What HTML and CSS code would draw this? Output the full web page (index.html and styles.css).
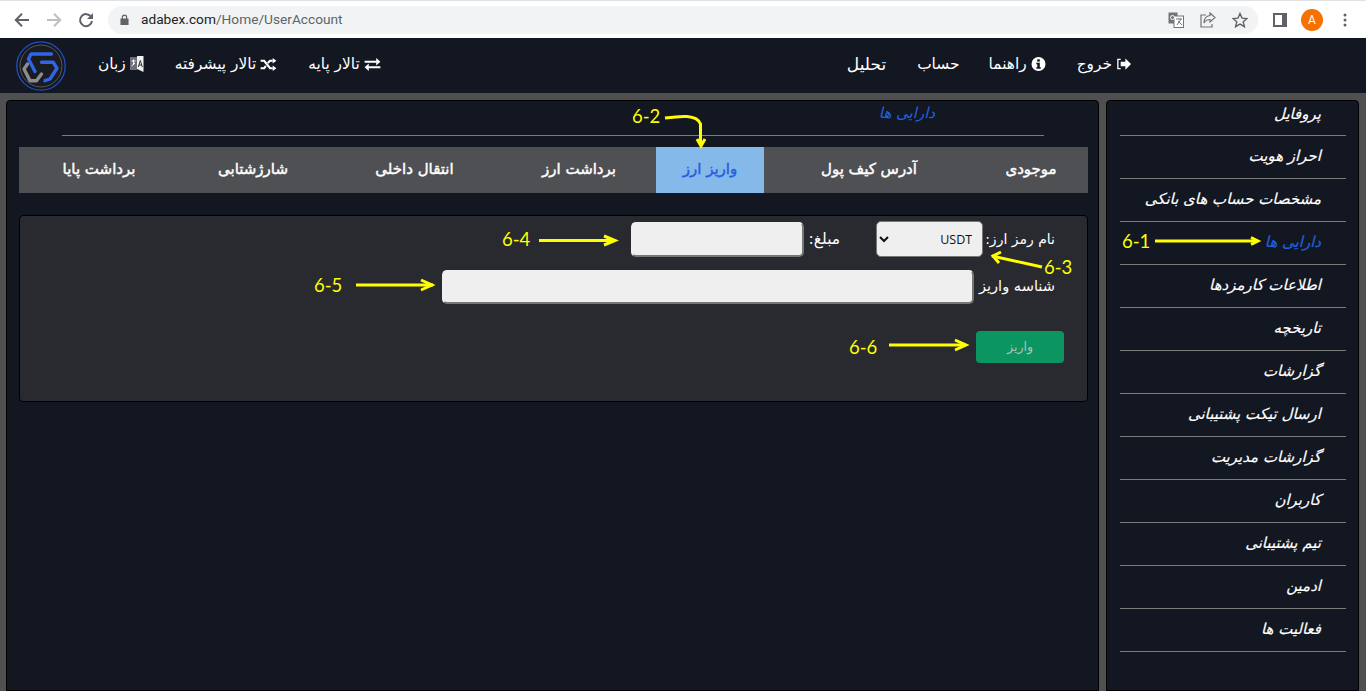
FILE: index.html
```html
<!DOCTYPE html>
<html lang="fa">
<head>
<meta charset="utf-8">
<title>adabex</title>
<link rel="stylesheet" href="styles.css">
</head>
<body>
<div class="chrome">
  <svg class="ci back" viewBox="0 0 16 16"><path d="M15 8H2.500M8 1.800 1.800 8 8 14.200" fill="none" stroke="#5f6368" stroke-width="2"/></svg>
  <svg class="ci fwd" viewBox="0 0 16 16"><path d="M1 8h12.500M8 1.800 14.200 8 8 14.200" fill="none" stroke="#bcbfc3" stroke-width="2"/></svg>
  <svg class="ci reload" viewBox="0 0 16 16"><path d="M13.200 5A6 6 0 1 0 14 9" fill="none" stroke="#5f6368" stroke-width="2"/><path d="M15 1v6H9z" fill="#5f6368"/></svg>
  <div class="omni">
    <svg class="lock" viewBox="0 0 10 12"><path d="M2 5V3.500a3 3 0 0 1 6 0V5h1.500v7H.5V5zm1.300 0h3.400V3.500a1.700 1.700 0 0 0-3.400 0z" fill="#5f6368"/></svg>
    <span class="url">adabex.com<span class="path">/Home/UserAccount</span></span>
    <span class="omni-space"></span>
    <svg class="oi" viewBox="0 0 16 16"><rect x="0.500" y="0.500" width="9" height="11" fill="#70757a"/><rect x="6" y="4" width="9.500" height="11.500" fill="#fff" stroke="#70757a"/><path d="M8 7h6M11 6v1M9 13l4-6M10 9l4 4" stroke="#70757a" fill="none"/><circle cx="4.500" cy="5.500" r="2" fill="none" stroke="#fff"/></svg>
    <svg class="oi" viewBox="0 0 16 16"><path d="M6 3H1v12h11v-3" fill="none" stroke="#70757a" stroke-width="1.200"/><path d="M10 1l5 4.500L10 10V7.500C7 7.500 5 9 4 11c0-4 2-7 6-7.500z" fill="none" stroke="#70757a" stroke-width="1.200"/></svg>
    <svg class="oi" viewBox="0 0 16 16"><path d="M8 1.500l2 4.600 5 .4-3.800 3.300 1.200 4.900L8 12.100l-4.400 2.600 1.200-4.900L1 6.500l5-.4z" fill="none" stroke="#5f6368" stroke-width="1.400"/></svg>
  </div>
  <svg class="ci side" viewBox="0 0 14 14"><rect x="1" y="1" width="12" height="12" fill="none" stroke="#5f6368" stroke-width="2"/><rect x="9" y="1" width="4" height="12" fill="#5f6368"/></svg>
  <span class="avatar">A</span>
  <svg class="dots" viewBox="0 0 4 14"><circle cx="2" cy="2" r="1.500"/><circle cx="2" cy="7" r="1.500"/><circle cx="2" cy="12" r="1.500"/></svg>
</div>

<header class="nav">
  <svg class="logo" viewBox="0 0 50 50">
    <circle cx="25" cy="25" r="24.200" fill="#14171f" stroke="#1f4fc0" stroke-width="1.300"/>
    <circle cx="25" cy="25" r="21" fill="#1a1c21" stroke="#55585c" stroke-width="1"/>
    <g fill="none" stroke-width="3.400" stroke-linejoin="round" stroke-linecap="round">
      <path d="M11.500 23 8 28l6 11.700h6.500L25.500 33" stroke="#8b8d90"/>
      <path d="M35.500 13H15l-2.500 5L19 30.500" stroke="#2f66e8"/>
      <path d="M25.500 21.300H37.300L41 27.300 34 38l-5 1.700" stroke="#2f66e8"/>
    </g>
  </svg>
  <a class="nav-link lang"><svg class="ni ni-lang" viewBox="0 0 14 16"><rect x="0" y="1" width="7" height="13" fill="#6d7077"/><path d="M7 0h6.500v16L7 13z" fill="#f1f1f1"/><path d="M8.300 11l2-6.500 2 6.500M9 9h2.600" stroke="#333" fill="none"/><path d="M1.500 5h4M3.500 3.500V9M1.500 10l3.500-3" stroke="#fff" fill="none"/></svg><span>زبان</span></a>
  <a class="nav-link adv"><svg class="ni ni-wide" viewBox="0 0 17 14"><path d="M0 3h3.800l6.400 8h2.800M0 11h3.800l1.900-2.400M7.700 5.400 10.200 3h2.800" fill="none" stroke="#fff" stroke-width="2.300"/><path d="M13 0l4 3-4 3zM13 8l4 3-4 3z" fill="#fff"/></svg><span>تالار پیشرفته</span></a>
  <a class="nav-link basic"><svg class="ni ni-wide" viewBox="0 0 17 14"><path d="M0 4h13M17 10H4" stroke="#fff" stroke-width="2.300" fill="none"/><path d="M12.500 0l4.500 4-4.500 4zM4.500 6L0 10l4.500 4z" fill="#fff"/></svg><span>تالار پایه</span></a>
  <span class="nav-fill"></span>
  <a class="nav-link tahlil"><span>تحلیل</span></a>
  <a class="nav-link hesab"><span>حساب</span></a>
  <a class="nav-link help"><svg class="ni" viewBox="0 0 14 14"><circle cx="7" cy="7" r="7" fill="#fff"/><rect x="5.700" y="2.300" width="2.600" height="2.300" fill="#131722"/><path d="M4.800 5.800h3.500v4.400h1v1.500H4.800v-1.500h1V7.300h-1z" fill="#131722"/></svg><span>راهنما</span></a>
  <a class="nav-link exit"><svg class="ni" viewBox="0 0 16 14"><path d="M5 2H2v10h3" fill="none" stroke="#fff" stroke-width="1.400"/><path d="M5 4.500h5V1l6 6-6 6V9.500H5z" fill="#fff"/></svg><span>خروج</span></a>
</header>

<main class="page">
  <section class="content">
    <h2 class="title">دارایی ها</h2>
    <hr class="rule title-rule">
    <nav class="tabs">
      <a class="tab">موجودی</a>
      <a class="tab">آدرس کیف پول</a>
      <a class="tab active">واریز ارز</a>
      <a class="tab">برداشت ارز</a>
      <a class="tab">انتقال داخلی</a>
      <a class="tab">شارژشتابی</a>
      <a class="tab">برداشت پایا</a>
    </nav>
    <form class="panel">
      <div class="row row-one">
        <label class="lbl">نام رمز ارز:</label>
        <select class="coin"><option>USDT</option></select>
        <label class="lbl lbl-amount">مبلغ:</label>
        <input class="field amount" type="text">
      </div>
      <div class="row row-two">
        <label class="lbl lbl-txid">شناسه واریز</label>
        <input class="field txid" type="text">
      </div>
      <button class="submit" type="button">واریز</button>
    </form>
  </section>

  <aside class="sidebar">
    <ul class="menu">
      <li>پروفایل</li>
      <li>احراز هویت</li>
      <li>مشخصات حساب های بانکی</li>
      <li class="current">دارایی ها</li>
      <li>اطلاعات کارمزدها</li>
      <li>تاریخچه</li>
      <li>گزارشات</li>
      <li>ارسال تیکت پشتیبانی</li>
      <li>گزارشات مدیریت</li>
      <li>کاربران</li>
      <li>تیم پشتیبانی</li>
      <li>ادمین</li>
      <li>فعالیت ها</li>
    </ul>
  </aside>
</main>

<svg class="marks" viewBox="0 0 1366 691">
  <g fill="none" stroke="#ffff00" stroke-width="3">
    <path d="M1155 241H1258"/><path d="M1251 237.500l7 3.500-7 3.500"/>
    <path d="M665 118C680 116 697 114 700.500 124V146"/><path d="M697 139l4 7 4-7"/>
    <path d="M1042 267 992 256"/><path d="M1001 252l-8 4 6 7"/>
    <path d="M539 240.500H615"/><path d="M604 236l11 4.500-11 4.500"/>
    <path d="M356 285H433"/><path d="M421 280l11 5-11 5"/>
    <path d="M889 345H966"/><path d="M955 340l11 5-11 5"/>
  </g>
</svg>
<span class="tag t61">6-1</span>
<span class="tag t62">6-2</span>
<span class="tag t63">6-3</span>
<span class="tag t64">6-4</span>
<span class="tag t65">6-5</span>
<span class="tag t66">6-6</span>
</body>
</html>
```
FILE: styles.css
```css
* { box-sizing: border-box; }
html, body { margin: 0; height: 691px; overflow: hidden; }
body { position: relative; background: #505050; font-family: "DejaVu Sans", sans-serif; color: #fff; display: flex; flex-direction: column; }

.chrome { height: 38px; background: #fff; border-top: 1px solid #dee1e6; display: flex; align-items: center; padding-left: 14px; flex: none; }
.ci { width: 16px; height: 16px; flex: none; }
.fwd { margin-left: 16px; }
.reload { margin-left: 16px; }
.omni { margin-left: 14px; width: 1150px; height: 28px; background: #f1f3f4; border-radius: 14px; display: flex; align-items: center; padding: 0 10px 0 12px; flex: none; }
.lock { width: 9px; height: 11px; }
.url { margin: -1px 0 0 12px; font: 13.700px "Roboto", sans-serif; color: #202124; }
.path { color: #5f6368; }
.omni-space { flex: 1; }
.oi { width: 16px; height: 16px; margin-left: 16px; }
.side { width: 14px; height: 14px; margin-left: 15px; }
.avatar { width: 22px; height: 22px; border-radius: 50%; background: #f57100; color: #fff; font: 12px "Roboto", sans-serif; display: flex; align-items: center; justify-content: center; margin-left: 14px; flex: none; }
.dots { width: 4px; height: 14px; margin-left: 20px; fill: #5f6368; flex: none; }

.nav { height: 55px; background: #131722; display: flex; align-items: center; padding-left: 16px; flex: none; font-size: 15.400px; }
.logo { width: 50px; height: 50px; flex: none; }
.nav-link { display: flex; align-items: center; gap: 4px; direction: rtl; color: #fff; white-space: nowrap; margin-top: -3px; }
.ni { width: 15px; height: 14px; flex: none; }
.ni-lang { width: 14px; height: 16px; }
.ni-wide { width: 17px; height: 13px; }
.lang { margin-left: 32px; }
.adv { margin-left: 31px; }
.basic { margin-left: 31px; }
.nav-fill { flex: 1; }
.tahlil { font-size: 17px; }
.hesab { margin-left: 31px; }
.help { margin-left: 29px; }
.exit { margin-left: 31px; margin-right: 235px; }

.page { flex: 1; min-height: 0; display: flex; gap: 7px; padding: 7px 7px 0 6px; }
.content, .sidebar { background: #131722; border: 1px solid #000; border-radius: 4px 4px 0 0; }
.content { flex: 1; padding: 0 10px 0 12px; direction: rtl; display: flex; flex-direction: column; }
.sidebar { width: 253px; flex: none; padding: 0 12px 0 13px; direction: rtl; }

.title { margin: 0; height: 34px; padding: 2px 153px 0 0; font-size: 15px; font-weight: normal; font-style: oblique; color: #1f62e0; line-height: 20px; }
.rule { margin: 0; border: 0; height: 1px; background: #7b7b7b; }
.title-rule { margin: 0 44px 0 43px; }
.tabs { margin-top: 11px; height: 46px; background: #4f5053; display: grid; grid-template-columns: 114px 210px 108px 154px 175px 148px 160px; flex: none; }
.tab { display: flex; align-items: center; justify-content: center; font-size: 15px; -webkit-text-stroke: 0.450px currentColor; color: #fff; padding-bottom: 3px; white-space: nowrap; }
.active { background: #85b9ea; color: #2a5ce0; }

.panel { margin-top: 22px; height: 187px; background: #292a2f; border: 1px solid #000; border-radius: 4px; display: flex; flex-direction: column; padding: 5px 32px 0 0; }
.row { display: flex; align-items: center; }
.row-one { height: 36px; }
.row-two { margin-top: 13px; height: 34px; }
.lbl { font-size: 14px; color: #fff; white-space: nowrap; }
.coin { width: 107px; height: 36px; margin-right: 2px; background: #efefef; border: 1px solid #767676; border-radius: 5px; font: 12.500px "Open Sans", sans-serif; color: #111; padding: 0 6px; direction: rtl; }
.lbl-amount { margin-right: 36px; font-size: 15.500px; }
.lbl-txid { font-size: 14.600px; margin-bottom: 3px; }
.field { background: #efefef; border-style: solid; border-width: 2px; border-color: #efefef #767676 #767676 #efefef; border-radius: 5px; padding: 0 6px; }
.amount { width: 173px; height: 35px; margin-right: 5px; align-self: flex-end; }
.txid { width: 532px; height: 34px; margin-right: 5px; }
.submit { margin: 27px -9px 0 0; width: 88px; height: 32px; background: #0b9561; border: 0; border-radius: 4px; color: #b5bfb6; font: 12.500px "DejaVu Sans", sans-serif; padding: 0 0 2px; align-self: flex-start; }

.menu { list-style: none; margin: 0; padding: 0; }
.menu li { height: 43px; border-bottom: 1px solid #7b7b7b; padding: 0 25px 0 0; font-size: 15px; font-style: oblique; line-height: 40px; white-space: nowrap; -webkit-text-stroke: 0.150px currentColor; }
.menu li:first-child { height: 35px; line-height: 26px; }
.menu .current { color: #1f62e0; }

.marks { position: absolute; left: 0; top: 0; width: 1366px; height: 691px; pointer-events: none; }
.tag { position: absolute; font: 18.500px "Lato", sans-serif; color: #ffff00; line-height: 24px; }
.t61 { left: 1122px; top: 229px; }
.t62 { left: 632px; top: 104px; }
.t63 { left: 1044px; top: 255px; }
.t64 { left: 502px; top: 227px; }
.t65 { left: 314px; top: 273px; }
.t66 { left: 849px; top: 335px; }
```
